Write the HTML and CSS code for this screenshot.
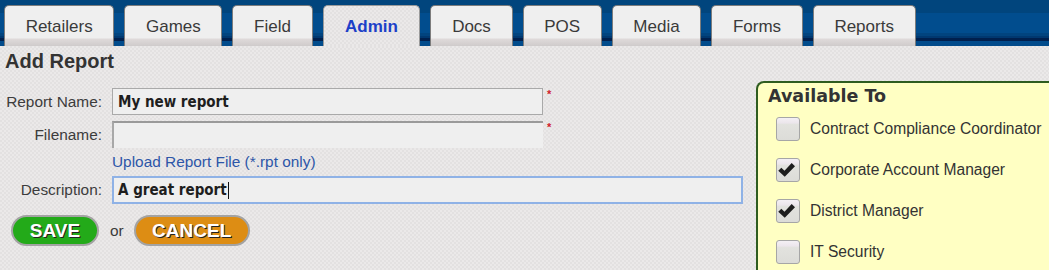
FILE: index.html
```html
<!DOCTYPE html>
<html lang="en">
<head>
<meta charset="utf-8">
<title>Add Report</title>
<link rel="stylesheet" href="styles.css">
</head>
<body>
<header class="topbar">
  <nav class="tabs">
    <a class="tab">Retailers</a>
    <a class="tab">Games</a>
    <a class="tab">Field</a>
    <a class="tab tab-active">Admin</a>
    <a class="tab">Docs</a>
    <a class="tab">POS</a>
    <a class="tab">Media</a>
    <a class="tab">Forms</a>
    <a class="tab">Reports</a>
  </nav>
</header>
<main class="page">
  <section class="form-col">
    <h1 class="title">Add Report</h1>
    <div class="form">
      <div class="row row-first">
        <label class="label">Report Name:</label>
        <div class="field field-text"><span class="value">My new report</span></div>
        <span class="req">*</span>
      </div>
      <div class="row">
        <label class="label">Filename:</label>
        <div class="field field-file"></div>
        <span class="req">*</span>
      </div>
      <div class="link-row">
        <a class="upload">Upload Report File (*.rpt only)</a>
      </div>
      <div class="row row-desc">
        <label class="label">Description:</label>
        <div class="field field-desc"><span class="value">A great report</span><span class="caret"></span></div>
      </div>
      <div class="actions">
        <button class="btn btn-save">SAVE</button>
        <span class="or">or</span>
        <button class="btn btn-cancel">CANCEL</button>
      </div>
    </div>
  </section>
  <aside class="panel">
    <h2 class="panel-title">Available To</h2>
    <ul class="roles">
      <li class="role"><span class="box"></span><span class="role-name">Contract Compliance Coordinator</span></li>
      <li class="role"><span class="box"><svg class="check" viewBox="0 0 24 24"><path d="M1.5 13 L5.2 9.3 L9 13 L17.6 3.6 L21.6 7.4 L9.3 20.2 Z"/></svg></span><span class="role-name">Corporate Account Manager</span></li>
      <li class="role"><span class="box"><svg class="check" viewBox="0 0 24 24"><path d="M1.5 13 L5.2 9.3 L9 13 L17.6 3.6 L21.6 7.4 L9.3 20.2 Z"/></svg></span><span class="role-name">District Manager</span></li>
      <li class="role"><span class="box"></span><span class="role-name">IT Security</span></li>
    </ul>
  </aside>
</main>
</body>
</html>
```
FILE: styles.css
```css
html, body {
  margin: 0;
  padding: 0;
}
body {
  width: 1049px;
  height: 270px;
  overflow: hidden;
  font-family: "Liberation Sans", Arial, sans-serif;
  color: #3a3a3a;
  background-color: #e7e5e5;
  background-image: repeating-conic-gradient(#ebe9e9 0 25%, #e3e1e1 0 50%);
  background-size: 4px 4px;
}

/* top bar */
.topbar {
  height: 46px;
  background: linear-gradient(to bottom,
    #01457d 0, #01457d 13px,
    #014d8e 13px, #014d8e 33px,
    #01447f 33px, #01447f 36px,
    #003870 36px, #003870 38px,
    #00204e 38px, #00204e 41px,
    #014b8b 41px, #014b8b 46px);
}
.tabs {
  display: flex;
  align-items: flex-end;
  gap: 10px;
  height: 46px;
  padding-left: 4px;
}
.tab {
  box-sizing: border-box;
  height: 41px;
  padding: 11px 20.65px 0;
  border: 1px solid #7c7c7c;
  border-bottom: none;
  border-radius: 5px 5px 0 0;
  background: linear-gradient(to bottom, #efefef 0, #efefef 32px, #dfdada 33px, #cfcbcb 40px);
  font-size: 17px;
  line-height: 20px;
  color: #3a3a3a;
  text-align: center;
  text-decoration: none;
}
.tab-active {
  padding: 11px 21.5px 0;
  color: #1c40c8;
  font-weight: bold;
  border-color: #9a9a9a;
  background-color: #e7e5e5;
  background-image: repeating-conic-gradient(#ebe9e9 0 25%, #e3e1e1 0 50%);
  background-size: 4px 4px;
}

/* main */
.page {
  display: flex;
  align-items: flex-start;
}
.form-col {
  flex: 0 0 756px;
}
.title {
  margin: 3px 0 0 5px;
  font-size: 20px;
  line-height: 24px;
  font-weight: bold;
  color: #333;
}
.form {
  margin-top: 15px;
}
.row {
  display: flex;
  align-items: flex-start;
  height: 27px;
  margin-top: 6px;
}
.row-first {
  margin-top: 0;
}
.label {
  box-sizing: border-box;
  flex: 0 0 102px;
  margin-right: 10px;
  text-align: right;
  font-size: 15.4px;
  line-height: 27px;
  color: #3c3c3c;
}
.field {
  box-sizing: border-box;
  height: 27px;
  width: 431px;
  background: #efefef;
  display: flex;
  align-items: center;
  font-family: "DejaVu Sans Condensed", "DejaVu Sans", sans-serif;
  font-stretch: condensed;
  font-weight: bold;
  font-size: 15px;
  color: #1e1e1e;
}
.field-text {
  border: 1px solid #a9a9a9;
  padding-left: 5px;
}
.field-file {
  border-top: 2px solid #9a9a9a;
  border-left: 2px solid #a8a8a8;
}
.req {
  margin-left: 4px;
  margin-top: 1px;
  font-size: 11px;
  line-height: 11px;
  font-weight: bold;
  color: #d0202a;
}
.link-row {
  margin: 5px 0 0 112px;
  height: 18px;
  line-height: 18px;
}
.upload {
  font-size: 15.4px;
  color: #2d56a8;
  text-decoration: none;
}
.row-desc {
  margin-top: 5px;
  height: 28px;
}
.field-desc {
  width: 631px;
  height: 28px;
  border: 2px solid #8fb2e6;
  padding-left: 4px;
}
.caret {
  display: inline-block;
  width: 1px;
  height: 17px;
  margin-left: 1px;
  background: #111;
}
.actions {
  display: flex;
  align-items: center;
  margin: 11px 0 0 11px;
}
.btn {
  box-sizing: border-box;
  height: 31px;
  border: 2px solid #a3a3a3;
  border-radius: 16px;
  padding: 0;
  font-family: "Liberation Sans", Arial, sans-serif;
  font-weight: bold;
  font-size: 19px;
  line-height: 27px;
  color: #fff;
  text-shadow: 1px 1px 0 #222;
  cursor: pointer;
}
.btn-save {
  width: 88px;
  background: #23aa19;
}
.btn-cancel {
  width: 116px;
  background: #dd8d14;
}
.or {
  margin: 0 10px 0 11px;
  font-size: 15.4px;
  color: #3a3a3a;
}

/* right panel */
.panel {
  flex: 0 0 320px;
  box-sizing: border-box;
  height: 189px;
  margin-top: 35px;
  background: #ffffc3;
  border: 2px solid #2e5c1f;
  border-bottom: none;
  border-radius: 8px 0 0 0;
  padding: 3px 0 0 10px;
}
.panel-title {
  margin: 0;
  font-family: "DejaVu Sans", sans-serif;
  font-weight: bold;
  font-size: 17.5px;
  line-height: 20px;
  color: #333;
}
.roles {
  list-style: none;
  margin: 11px 0 0 8px;
  padding: 0;
  display: flex;
  flex-direction: column;
  gap: 17px;
}
.role {
  display: flex;
  align-items: center;
  height: 24px;
}
.box {
  box-sizing: border-box;
  flex: 0 0 24px;
  width: 24px;
  height: 24px;
  border: 1px solid #a6a6a6;
  border-radius: 3px;
  background: linear-gradient(to bottom, #f4f0f4 0, #ece6ec 22%, #e2e2de 30%, #dcdcd8 100%);
  display: flex;
  align-items: center;
  justify-content: center;
}
.check {
  width: 20px;
  height: 20px;
  margin: 0 2px 0 0;
  fill: #1e1e1e;
}
.role-name {
  margin-left: 10px;
  font-size: 15.6px;
  color: #333;
}
```
